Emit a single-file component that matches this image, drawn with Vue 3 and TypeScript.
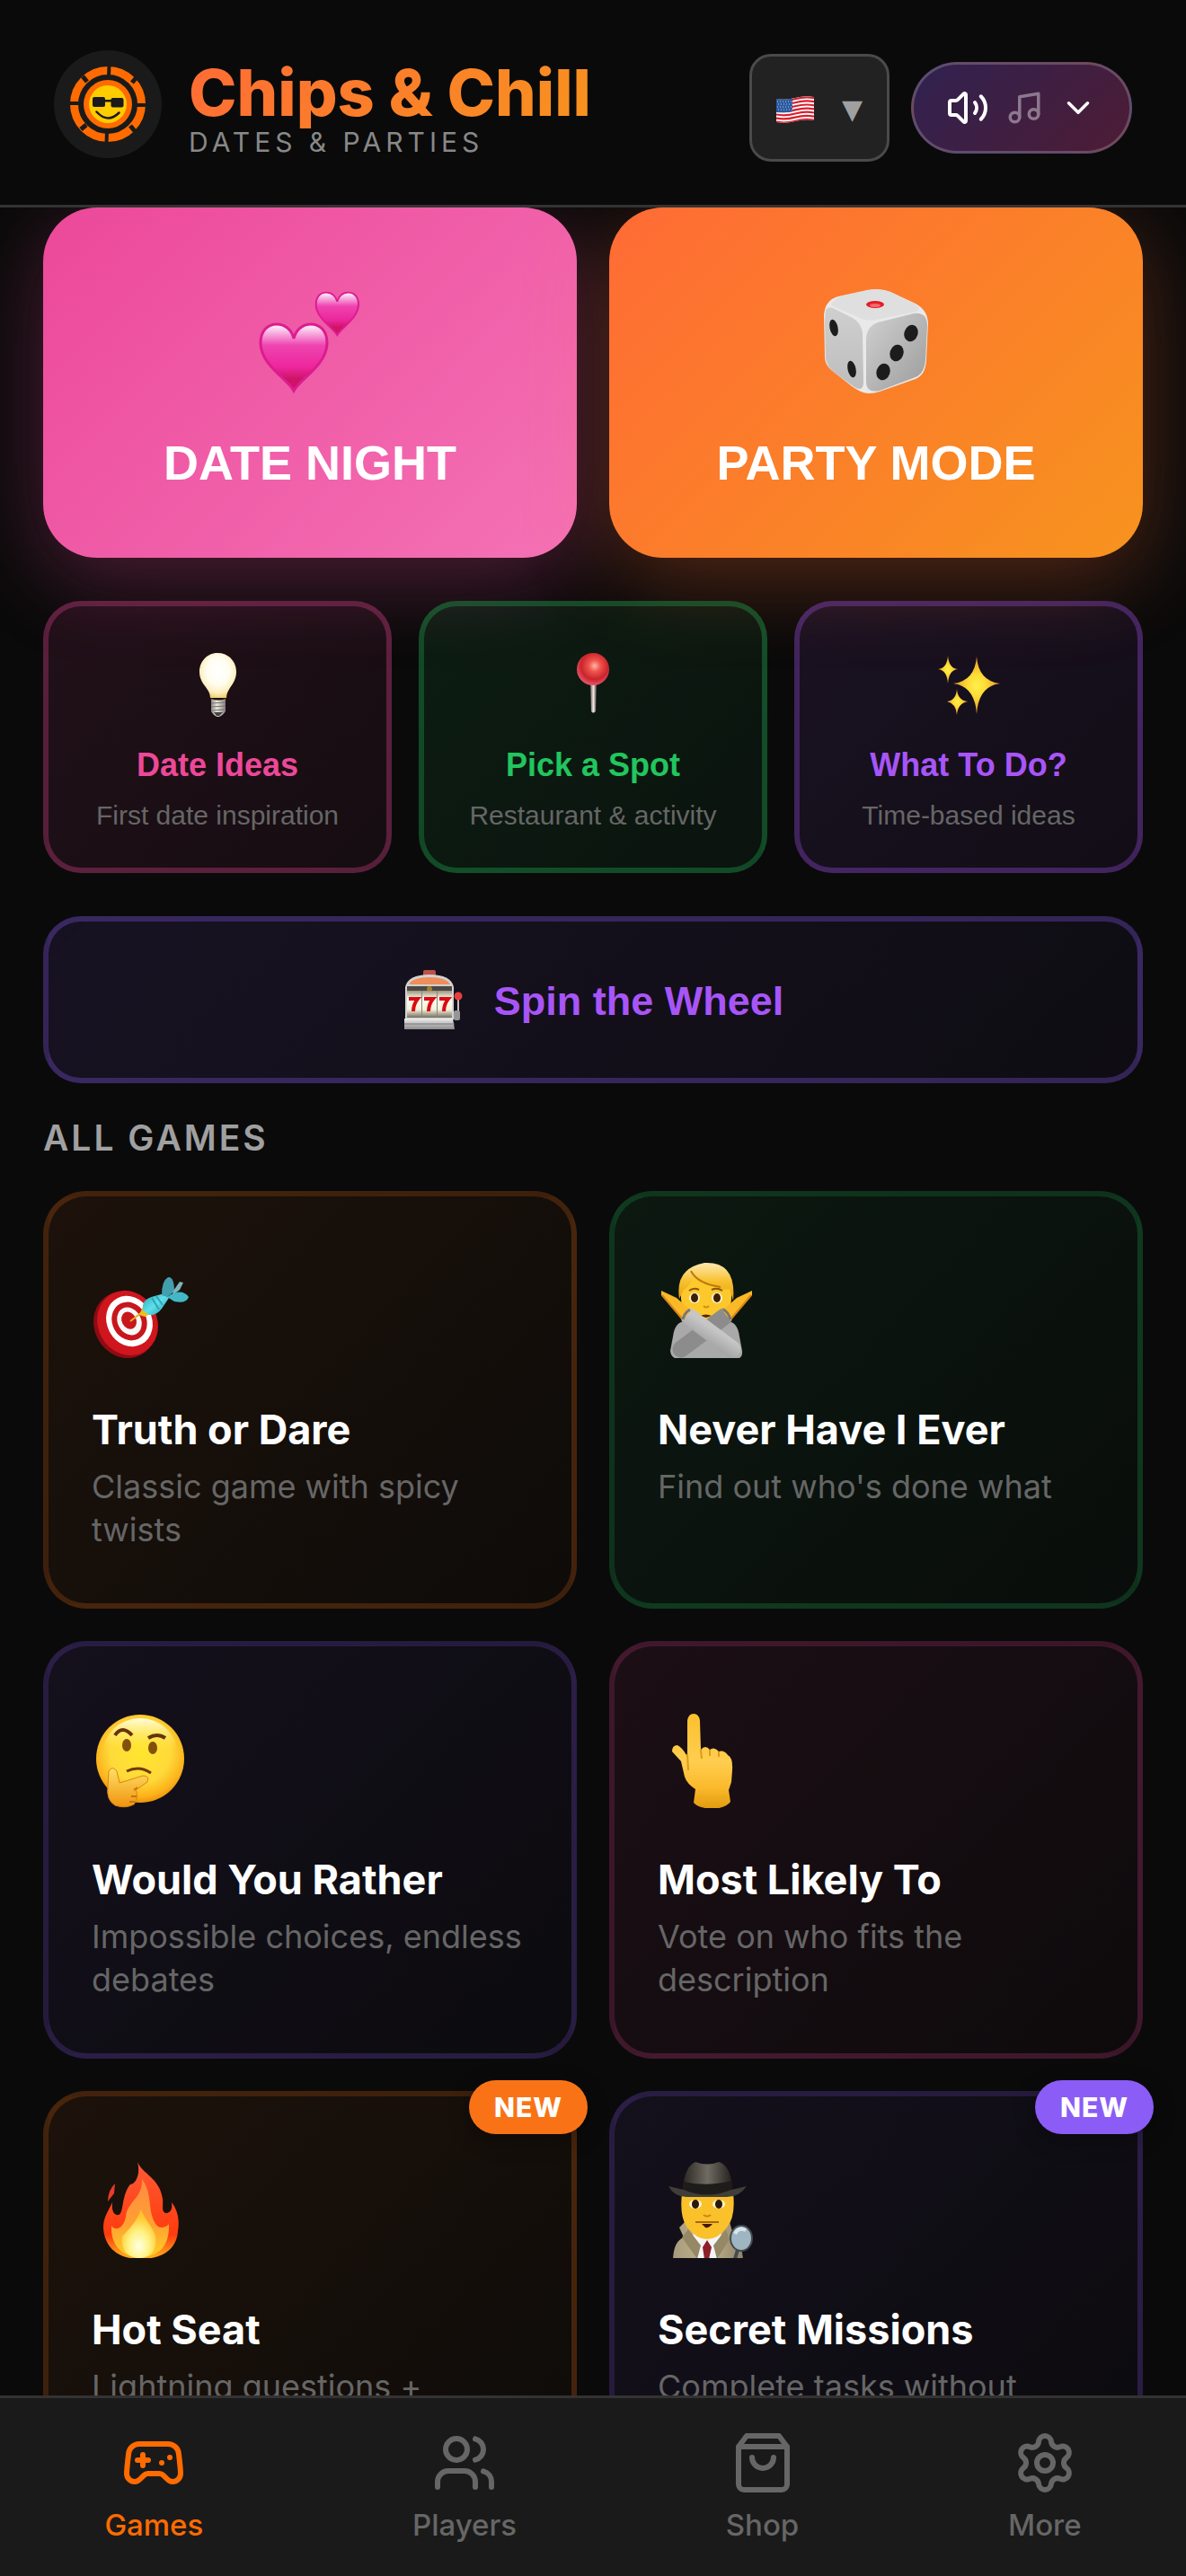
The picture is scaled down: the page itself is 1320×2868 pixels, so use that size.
<script setup lang="ts">
import { ref } from 'vue'

interface QuickLink { id: string; title: string; note: string; tone: string }
interface Game { id: string; title: string; text: string; tone: string; badge?: string }
interface Tab { id: string; label: string }

const language = ref('en')
const activeTab = ref('games')

const quickLinks: QuickLink[] = [
  { id: 'bulb', title: 'Date Ideas', note: 'First date inspiration', tone: 'pink' },
  { id: 'pin', title: 'Pick a Spot', note: 'Restaurant & activity', tone: 'green' },
  { id: 'sparkles', title: 'What To Do?', note: 'Time-based ideas', tone: 'purple' },
]

const games: Game[] = [
  { id: 'target', title: 'Truth or Dare', text: 'Classic game with spicy twists', tone: 'orange' },
  { id: 'never', title: 'Never Have I Ever', text: "Find out who's done what", tone: 'green' },
  { id: 'thinking', title: 'Would You Rather', text: 'Impossible choices, endless debates', tone: 'violet' },
  { id: 'pointing', title: 'Most Likely To', text: 'Vote on who fits the description', tone: 'pink' },
  { id: 'fire', title: 'Hot Seat', text: 'Lightning questions +', tone: 'orange', badge: 'NEW' },
  { id: 'detective', title: 'Secret Missions', text: 'Complete tasks without', tone: 'violet', badge: 'NEW' },
]

const tabs: Tab[] = [
  { id: 'games', label: 'Games' },
  { id: 'players', label: 'Players' },
  { id: 'shop', label: 'Shop' },
  { id: 'more', label: 'More' },
]
</script>

<template>
  <div class="app">
    <header class="header">
      <div class="brand">
        <svg class="logo" viewBox="0 0 120 120" aria-hidden="true">
          <circle cx="60" cy="60" r="60" fill="#1a1a1a" />
          <circle cx="60" cy="60" r="37.500" fill="none" stroke="#ff6b00" stroke-width="9" />
          <g stroke="#1a1a1a" stroke-width="4">
            <path d="M61.500 16 61 30M59 90 58.500 104M16 59H30M90 61H104" />
            <path d="M32 29 37 35M92 30 87 36M30 88 36 83M85 84 90 90" stroke-width="5" />
          </g>
          <circle cx="60" cy="60" r="27" fill="#ff6b00" />
          <circle cx="60" cy="60" r="21" fill="#ffcc00" />
          <g fill="#1a1a1a">
            <rect x="43" y="52" width="14" height="11" rx="2" />
            <rect x="63.500" y="53" width="14" height="10.500" rx="2" />
            <path d="M55 55h10v2.500H55z" />
          </g>
          <path d="M47.500 68.500Q60 82 72.500 69.500" fill="none" stroke="#1a1a1a" stroke-width="2.500" stroke-linecap="round" />
        </svg>
        <div class="brand-text">
          <h1>Chips &amp; Chill</h1>
          <p>DATES &amp; PARTIES</p>
        </div>
      </div>

      <div class="controls">
        <div class="language">
          <select v-model="language" aria-label="Language">
            <option value="en">EN</option>
          </select>
          <span class="language-face" aria-hidden="true">
            <svg class="flag" viewBox="0 0 42 30">
              <defs>
                <clipPath id="flagShape"><path d="M0 3Q10 5 21 2T42 1V27Q32 25 21 28T0 29Z" /></clipPath>
              </defs>
              <g clip-path="url(#flagShape)">
                <path d="M0 0H42V30H0z" fill="#fff" />
                <g fill="none" stroke="#d9202e" stroke-width="2.200">
                  <path v-for="n in 7" :key="n" d="M0 0Q10 2 21-1T42-2" :transform="`translate(0 ${n * 4.1})`" />
                </g>
                <path d="M0 2Q9 4.500 18 2V17Q9 19 0 18Z" fill="#2c5aa0" />
                <g fill="none" stroke="#b9cbe8" stroke-width="1" stroke-dasharray="1 2">
                  <path d="M1 6H18M2 9H18M1 12H18M2 15H18" />
                </g>
              </g>
            </svg>
            <span class="triangle">▼</span>
          </span>
        </div>
        <button class="audio" type="button" aria-label="Sound settings">
          <svg class="line-icon speaker" viewBox="0 0 24 24">
            <path d="M11 4.702a.705.705 0 0 0-1.203-.498L6.413 7.587A1.400 1.400 0 0 1 5.416 8H3a1 1 0 0 0-1 1v6a1 1 0 0 0 1 1h2.416a1.400 1.400 0 0 1 .997.413l3.383 3.384A.705.705 0 0 0 11 19.298z" />
            <path d="M16 9a5 5 0 0 1 0 6M19.364 18.364a9 9 0 0 0 0-12.728" />
          </svg>
          <svg class="line-icon music" viewBox="0 0 24 24">
            <path d="M9 18V5l12-2v13" /><circle cx="6" cy="18" r="3" /><circle cx="18" cy="16" r="3" />
          </svg>
          <svg class="line-icon" viewBox="0 0 24 24"><path d="m6 9 6 6 6-6" /></svg>
        </button>
      </div>
    </header>

    <main class="content">
      <div class="modes">
        <button class="mode date" type="button">
          <svg viewBox="0 0 120 120" aria-hidden="true">
            <defs>
              <linearGradient id="heartFill" x1="0" y1="0" x2="0" y2="1">
                <stop offset="0" stop-color="#fff" /><stop offset=".12" stop-color="#f8b5e2" />
                <stop offset=".32" stop-color="#ef44b0" /><stop offset=".65" stop-color="#ec269c" /><stop offset=".82" stop-color="#cf1467" />
              </linearGradient>
              <path id="heart" d="M38 75C31 62 1 46 1 22 1 8 9 1 19 1 29 1 36 8 38 17 40 8 47 1 57 1 67 1 75 8 75 22 75 46 45 62 38 75Z" fill="url(#heartFill)" stroke="#dc1c90" stroke-width="3" />
            </defs>
            <use href="#heart" x="4" y="39" />
            <use href="#heart" transform="translate(66 4) scale(.64)" />
          </svg>
          <span>DATE NIGHT</span>
        </button>
        <button class="mode party" type="button">
          <svg viewBox="0 0 120 120" aria-hidden="true">
            <defs>
              <linearGradient id="dieLeft" x1="0" y1="0" x2="0" y2="1"><stop offset="0" stop-color="#cfcfcf" /><stop offset="1" stop-color="#bdbdbd" /></linearGradient>
              <linearGradient id="dieRight" x1="0" y1="0" x2="1" y2="1"><stop offset="0" stop-color="#d0d0d0" /><stop offset="1" stop-color="#9c9c9c" /></linearGradient>
            </defs>
            <path d="M52 117C45 117 39 113 33 109L14 94C6 88 3 83 3 76L2 30C3 18 8 12 18 9L50 2C60 0 68 1 76 4L104 17C113 22 117 28 118 38L116 80C115 92 112 97 104 101L64 115Q58 117 52 117Z" fill="#e9e9e9" />
            <path d="M12 15Q16 10 26 8L52 2Q64 0 76 4L102 17Q112 23 104 26L60 35Q48 37 38 31L12 20Q8 18 12 15Z" fill="#dedfde" />
            <path d="M4 24Q8 19 14 23L34 33Q44 39 45 50L46 104Q46 116 36 110L14 94Q5 87 4 78L3 36Z" fill="url(#dieLeft)" />
            <path d="M49 56Q50 42 62 38L102 28Q117 26 117 42L115 80Q114 93 106 98L64 114Q49 117 49 104Z" fill="url(#dieRight)" />
            <ellipse cx="59" cy="18" rx="10" ry="4" fill="#e51c26" /><ellipse cx="59" cy="19" rx="6" ry="2" fill="#f26a6c" />
            <g fill="#1c1c1c">
              <ellipse cx="13" cy="44" rx="4.500" ry="9.500" transform="rotate(-12 13 44)" />
              <ellipse cx="33" cy="90" rx="4.500" ry="9.500" transform="rotate(-12 33 90)" />
              <ellipse cx="99" cy="50" rx="7.500" ry="9.500" transform="rotate(18 99 50)" />
              <ellipse cx="83" cy="72" rx="7.500" ry="9.500" transform="rotate(18 83 72)" />
              <ellipse cx="68" cy="93" rx="7.500" ry="9.500" transform="rotate(18 68 93)" />
            </g>
          </svg>
          <span>PARTY MODE</span>
        </button>
      </div>

      <div class="quick">
        <button v-for="link in quickLinks" :key="link.id" type="button" class="quick-card" :class="link.tone">
          <svg v-if="link.id === 'bulb'" viewBox="0 0 72 72" aria-hidden="true">
            <defs>
              <radialGradient id="bulbGlass" cx=".5" cy=".4" r=".62"><stop offset="0" stop-color="#fff" /><stop offset=".5" stop-color="#fffdf0" /><stop offset=".8" stop-color="#fbeebc" /><stop offset="1" stop-color="#efcb60" /></radialGradient>
              <linearGradient id="bulbBase"><stop offset="0" stop-color="#8d8882" /><stop offset=".4" stop-color="#e8e5de" /><stop offset="1" stop-color="#85807a" /></linearGradient>
            </defs>
            <path d="M29 52Q37 55 45 52L45 66Q41 72 36 72 32 71 29 66Z" fill="url(#bulbBase)" />
            <path d="M32 67H42L38 71H35Z" fill="#444" />
            <path d="M29 57 45 56M29 61 45 60M30 65 44 64" stroke="#77736d" stroke-width="1" />
            <path d="M36 1C49 1 57 11 57 22 57 36 46 40 46 51H28C28 40 16 36 16 22 16 11 24 1 36 1Z" fill="url(#bulbGlass)" />
          </svg>
          <svg v-else-if="link.id === 'pin'" viewBox="0 0 72 72" aria-hidden="true">
            <defs>
              <radialGradient id="pinBall" cx=".55" cy=".4" r=".6"><stop offset="0" stop-color="#ffb6a4" /><stop offset=".3" stop-color="#f0544c" /><stop offset=".7" stop-color="#c9242d" /><stop offset="1" stop-color="#e8556a" /></radialGradient>
              <linearGradient id="pinNeedle"><stop offset="0" stop-color="#6c625e" /><stop offset=".5" stop-color="#f0e4df" /><stop offset="1" stop-color="#4d4744" /></linearGradient>
            </defs>
            <path d="M33 34H40L39 66Q36 69 34 66Z" fill="url(#pinNeedle)" />
            <circle cx="36" cy="19" r="18" fill="url(#pinBall)" />
          </svg>
          <svg v-else viewBox="0 0 72 72" aria-hidden="true">
            <defs>
              <radialGradient id="starFill"><stop offset="0" stop-color="#fff04d" /><stop offset=".4" stop-color="#fddb35" /><stop offset="1" stop-color="#e89128" /></radialGradient>
            </defs>
            <g fill="url(#starFill)">
              <path d="M45 5Q47 32 71 35 47 38 45 69 43 38 19 35 43 32 45 5Z" />
              <path d="M13 4Q14 18 24 19 14 20 13 35 12 20 2 19 12 18 13 4Z" />
              <path d="M23 41Q24 54 35 55 24 57 23 70 22 57 12 55 22 54 23 41Z" />
            </g>
          </svg>
          <strong>{{ link.title }}</strong>
          <small>{{ link.note }}</small>
        </button>
      </div>

      <button class="spin" type="button">
        <svg viewBox="0 0 72 72" aria-hidden="true">
          <defs>
            <linearGradient id="slotReel" x1="0" y1="0" x2="0" y2="1"><stop offset="0" stop-color="#9a957f" /><stop offset=".3" stop-color="#fffff0" /><stop offset=".7" stop-color="#f3f0dc" /><stop offset="1" stop-color="#756f5f" /></linearGradient>
            <linearGradient id="slotBase" x1="0" y1="0" x2="0" y2="1"><stop offset="0" stop-color="#eee" /><stop offset="1" stop-color="#8b8b8b" /></linearGradient>
          </defs>
          <rect x="23" y="3" width="14" height="8" rx="2" fill="#bf5148" />
          <path d="M3 22Q6 8 30 8T57 22V58H3Z" fill="#d2d2d2" />
          <path d="M7 19Q11 11 30 11T53 19Z" fill="#ef8d5b" />
          <path d="M5 21H55V26H5z" fill="#4b4844" />
          <circle cx="30" cy="24" r="3" fill="#a67d28" />
          <path d="M5 26H55V56H5z" fill="url(#slotReel)" />
          <path d="M21.500 26V56M38.500 26V56" stroke="#8b8575" stroke-width="1" />
          <path d="M2 57H56L58 69H2z" fill="url(#slotBase)" />
          <path d="M2 63H58" stroke="#777" stroke-width="1" />
          <path d="M62 32V57" stroke="#c7bdb9" stroke-width="2" />
          <rect x="57" y="48" width="7" height="11" rx="2" fill="#969696" />
          <circle cx="62" cy="32" r="4.500" fill="#e73f3c" />
          <g fill="none" stroke="#dd0b12" stroke-width="4">
            <path d="M7 35H17Q12 41 12 49M24 35H34Q29 41 29 49M41 35H51Q46 41 46 49" />
          </g>
        </svg>
        <span>Spin the Wheel</span>
      </button>

      <h2>ALL GAMES</h2>

      <div class="games">
        <button v-for="game in games" :key="game.id" type="button" class="game" :class="game.tone">
          <svg v-if="game.id === 'target'" viewBox="0 0 108 108" aria-hidden="true">
            <defs><linearGradient id="dartBody" x1="0" y1="0" x2="1" y2="1"><stop offset="0" stop-color="#2aa3b5" /><stop offset=".5" stop-color="#5fe0ec" /><stop offset="1" stop-color="#2795a6" /></linearGradient></defs>
            <ellipse cx="37" cy="71" rx="34" ry="38" fill="#8d0c12" transform="rotate(-28 37 71)" />
            <ellipse cx="40" cy="69" rx="33" ry="37" fill="#cf151d" transform="rotate(-28 40 69)" />
            <g transform="rotate(-28 42 67)">
              <ellipse cx="42" cy="67" rx="25" ry="29" fill="#fff" />
              <ellipse cx="42" cy="67" rx="19" ry="22" fill="#c8161d" />
              <ellipse cx="42" cy="67" rx="13" ry="16" fill="#f7f7f7" />
              <ellipse cx="42" cy="66" rx="8" ry="10" fill="#c8161d" />
            </g>
            <path d="M43 67 56 57" stroke="#e6b31d" stroke-width="2" />
            <path d="M53 60 57 51 65 59 59 62Z" fill="#edc019" />
            <path d="M57 55Q55 42 70 39L81 36 86 41 78 53Q72 61 64 60Z" fill="url(#dartBody)" />
            <path d="M78 38Q78 22 85 18 92 17 92 34L84 40Z" fill="#419fae" />
            <path d="M91 33 98 23 102 24 98 32 90 38Z" fill="#7fb4bd" />
            <path d="M84 40Q100 29 108 40 105 48 92 45Z" fill="#42b8c7" />
            <path d="M67 41 75 54M72 39 79 49" stroke="#2fa5b5" stroke-width="2" />
          </svg>

          <svg v-else-if="game.id === 'never'" viewBox="0 0 108 108" aria-hidden="true">
            <defs>
              <linearGradient id="hair" x1="0" y1="0" x2="0" y2="1"><stop offset="0" stop-color="#ffe9b0" /><stop offset=".5" stop-color="#f7c02c" /><stop offset="1" stop-color="#e39f15" /></linearGradient>
              <linearGradient id="sleeve" gradientUnits="userSpaceOnUse" x1="60" y1="74" x2="50" y2="90"><stop offset="0" stop-color="#c6c6c6" /><stop offset="1" stop-color="#a2a2a2" /></linearGradient>
            </defs>
            <path d="M30 67Q19 68 17 84L14 100Q15 109 24 109H86Q95 109 94 100L91 84Q89 68 78 67Z" fill="#a9a9a9" />
            <rect x="26" y="10" width="56" height="58" rx="26" fill="#fdc82b" />
            <path d="M24 42Q19 8 52 2 88 0 84 44L80 31Q74 33 66 29 48 25 39 18 36 28 29 32Z" fill="url(#hair)" />
            <path d="M37 11Q44 25 70 29" fill="none" stroke="#b97a0d" stroke-width="2" />
            <path d="M35 33Q40 29 46 32M60 32Q66 29 72 33" fill="none" stroke="#8d560d" stroke-width="2" />
            <circle cx="41" cy="41" r="6" fill="#fff5d0" /><circle cx="66" cy="41" r="6" fill="#fff5d0" />
            <ellipse cx="41" cy="41" rx="4" ry="5" fill="#3d1f06" /><ellipse cx="66" cy="41" rx="4" ry="5" fill="#3d1f06" />
            <path d="M51 50Q54 53 57 50" fill="none" stroke="#d79012" stroke-width="2" />
            <path d="M47 61Q54 58 60 61L54 63Z" fill="#56230c" />
            <g fill="none" stroke-linecap="round" stroke-width="19">
              <path d="M74 62 26 98" stroke="#8c8c8c" />
              <path d="M35 62 83 98" stroke="url(#sleeve)" />
            </g>
            <path d="M4 33 21 41 37 55 28 66 16 52 4 38Z" fill="#fbb827" /><path d="M105 33 88 41 72 55 81 66 93 52 105 38Z" fill="#fbb827" />
            <path d="M5 38 16 51 27 64M104 38 93 51 82 64" fill="none" stroke="#d88716" stroke-width="2" />
            <path d="M36 54Q30 57 28 65M73 54Q79 57 81 65" fill="none" stroke="#777" stroke-width="3" />
          </svg>

          <svg v-else-if="game.id === 'thinking'" viewBox="0 0 108 108" aria-hidden="true">
            <defs>
              <radialGradient id="faceFill" cx=".5" cy=".42" r=".58"><stop offset="0" stop-color="#ffe62e" /><stop offset=".6" stop-color="#ffd93a" /><stop offset=".88" stop-color="#fcb21a" /><stop offset="1" stop-color="#ee930b" /></radialGradient>
              <linearGradient id="faceShine" x1="0" y1="0" x2="0" y2="1"><stop offset="0" stop-color="#fffde0" /><stop offset=".45" stop-color="#ffef58" stop-opacity="0" /></linearGradient>
              <linearGradient id="chinHand" x1="0" y1="0" x2="0" y2="1"><stop offset="0" stop-color="#ffe066" /><stop offset="1" stop-color="#f0930f" /></linearGradient>
            </defs>
            <circle cx="54" cy="53" r="49" fill="url(#faceFill)" />
            <ellipse cx="54" cy="46" rx="41" ry="38" fill="url(#faceShine)" />
            <ellipse cx="39" cy="38" rx="5" ry="7" fill="#82500b" /><ellipse cx="68" cy="41" rx="5" ry="7" fill="#82500b" />
            <path d="M26 27Q34 15 45 27M63 30Q73 24 82 30" fill="none" stroke="#68330a" stroke-width="4" />
            <path d="M39 67Q53 60 66 69" fill="none" stroke="#713809" stroke-width="3" />
            <path d="M19 67Q23 60 28 67L31 80 57 72Q65 72 62 79L49 88Q53 95 47 104 37 109 26 105 16 99 18 84Z" fill="url(#chinHand)" stroke="#dc8510" stroke-width="1" />
            <path d="M47 88 51 85M44 95H50M42 101H48" stroke="#c67510" stroke-width="2" />
          </svg>

          <svg v-else-if="game.id === 'pointing'" viewBox="0 0 108 108" aria-hidden="true">
            <defs><linearGradient id="handFill" x1="0" y1="0" x2="0" y2="1"><stop offset="0" stop-color="#fcc02d" /><stop offset=".5" stop-color="#ffce50" /><stop offset=".78" stop-color="#fbb92b" /><stop offset="1" stop-color="#e19a0e" /></linearGradient></defs>
            <path d="M33 48V11Q34 3 40 3 46 3 47 11L48 43Q53 37 58 43 63 39 68 45 74 43 78 49 84 52 83 66L82 79 79 88 81 101Q76 108 61 109 45 108 40 102L42 87Q30 79 29 69L26 56 16 45Q16 38 22 38 28 41 33 51Z" fill="url(#handFill)" />
            <path d="M33 48 34 66M48 43 49 53M58 43V50M68 45 68 51" fill="none" stroke="#de9a18" stroke-width="2" />
          </svg>

          <svg v-else-if="game.id === 'fire'" viewBox="0 0 108 108" aria-hidden="true">
            <defs>
              <linearGradient id="flameOuter" x1="0" y1="0" x2="0" y2="1"><stop offset="0" stop-color="#ff5a34" /><stop offset=".75" stop-color="#ff3b0e" /><stop offset="1" stop-color="#ffb51f" /></linearGradient>
              <linearGradient id="flameMid" x1="0" y1="0" x2="0" y2="1"><stop offset="0" stop-color="#ff8a44" /><stop offset=".6" stop-color="#ffa231" /><stop offset="1" stop-color="#ffcf24" /></linearGradient>
              <radialGradient id="flameCore" cx=".5" cy=".75" r=".6"><stop offset="0" stop-color="#ffffe4" /><stop offset=".5" stop-color="#fff385" /><stop offset="1" stop-color="#ffc72d" /></radialGradient>
            </defs>
            <path d="M51 1C56 14 76 19 79 42 80 50 77 57 83 58 89 57 90 52 89 46 96 55 98 66 96 78 95 94 84 109 54 109 27 109 14 94 13 74 13 62 19 55 23 46 22 56 25 61 30 60 36 58 33 38 43 26 48 26 55 16 51 1Z" fill="url(#flameOuter)" />
            <path d="M26 25 25 36 18 45Q18 33 26 25Z" fill="#e83b29" />
            <path d="M56 20C68 36 62 54 70 68 75 78 84 73 86 70 87 94 75 107 54 107 34 107 21 94 22 72 27 79 36 74 38 62 40 44 57 42 56 20Z" fill="url(#flameMid)" />
            <path d="M55 54C59 66 68 72 71 84 73 99 66 108 53 108 40 108 32 98 34 84 41 76 50 68 55 54Z" fill="url(#flameCore)" />
          </svg>

          <svg v-else viewBox="0 0 108 108" aria-hidden="true">
            <defs>
              <linearGradient id="hatFill"><stop offset="0" stop-color="#292722" /><stop offset=".5" stop-color="#706b62" /><stop offset="1" stop-color="#23211e" /></linearGradient>
              <linearGradient id="coatFill"><stop offset="0" stop-color="#a79b7c" /><stop offset=".5" stop-color="#c3b590" /><stop offset="1" stop-color="#8f8468" /></linearGradient>
            </defs>
            <path d="M17 109Q18 89 29 85L24 74 30 68H80L85 85Q93 90 95 109Z" fill="url(#coatFill)" />
            <path d="M39 80H71L66 109H44Z" fill="#f5f5f5" />
            <path d="M55 88 60 96 57 109H52L50 96Z" fill="#8e1e29" />
            <path d="M27 36H84Q87 62 77 74 67 87 55 87 43 87 33 74 24 62 27 36Z" fill="#fac12b" />
            <path d="M34 76 48 94 44 109 27 85ZM76 76 62 94 66 109 80 87Z" fill="#968865" />
            <path d="M28 29Q31 5 42 1 55 6 68 1 81 5 83 29L78 37H33Z" fill="url(#hatFill)" />
            <path d="M29 23Q55 29 82 22L83 33Q55 44 28 33Z" fill="#1d1c1b" />
            <path d="M12 28 29 32Q55 43 82 32L99 28Q91 40 77 40H34Q18 40 12 28Z" fill="#413e39" />
            <ellipse cx="42" cy="48" rx="7" ry="5" fill="#fff4d2" /><ellipse cx="68" cy="48" rx="7" ry="5" fill="#fff4d2" />
            <ellipse cx="42" cy="48" rx="4" ry="5" fill="#2c1908" /><ellipse cx="68" cy="48" rx="4" ry="5" fill="#2c1908" />
            <path d="M51 60Q55 63 59 60" fill="none" stroke="#ce840d" stroke-width="2" />
            <path d="M42 68H68" fill="none" stroke="#a8660f" stroke-width="2" /><path d="M49 70H61Q57 75 53 74Z" fill="#42180a" />
            <path d="M89 99 86 109" stroke="#454b50" stroke-width="4" />
            <ellipse cx="93" cy="86" rx="12" ry="14" fill="#9fb5c2" stroke="#424a50" stroke-width="2" />
            <path d="M86 81Q90 73 98 77" fill="none" stroke="#d8e5ec" stroke-width="4" />
          </svg>

          <strong>{{ game.title }}</strong>
          <span class="description">{{ game.text }}</span>
          <span v-if="game.badge" class="badge">{{ game.badge }}</span>
        </button>
      </div>
    </main>

    <nav class="tabs" aria-label="Main">
      <button v-for="tab in tabs" :key="tab.id" type="button" :class="{ active: tab.id === activeTab }" @click="activeTab = tab.id">
        <svg class="line-icon" viewBox="0 0 24 24" aria-hidden="true">
          <template v-if="tab.id === 'games'">
            <path d="M6 11h4M8 9v4M15 12h.010M18 10h.010" />
            <path d="M17.320 5H6.680a4 4 0 0 0-3.978 3.590c-.006.052-.010.101-.017.152C2.604 9.416 2 14.456 2 16a3 3 0 0 0 3 3c1 0 1.500-.5 2-1l1.414-1.414A2 2 0 0 1 9.828 16h4.344a2 2 0 0 1 1.414.586L17 18c.5.5 1 1 2 1a3 3 0 0 0 3-3c0-1.545-.604-6.584-.685-7.258-.007-.050-.011-.1-.017-.151A4 4 0 0 0 17.320 5z" />
          </template>
          <template v-else-if="tab.id === 'players'">
            <path d="M16 21v-2a4 4 0 0 0-4-4H6a4 4 0 0 0-4 4v2" /><circle cx="9" cy="7" r="4" />
            <path d="M22 21v-2a4 4 0 0 0-3-3.870M16 3.130a4 4 0 0 1 0 7.750" />
          </template>
          <template v-else-if="tab.id === 'shop'">
            <path d="M6 2 3 6v14a2 2 0 0 0 2 2h14a2 2 0 0 0 2-2V6l-3-4ZM3 6h18M16 10a4 4 0 0 1-8 0" />
          </template>
          <template v-else>
            <path d="M9.671 4.136a2.340 2.340 0 0 1 4.659 0 2.340 2.340 0 0 0 3.319 1.915 2.340 2.340 0 0 1 2.330 4.033 2.340 2.340 0 0 0 0 3.831 2.340 2.340 0 0 1-2.330 4.033 2.340 2.340 0 0 0-3.319 1.915 2.340 2.340 0 0 1-4.659 0 2.340 2.340 0 0 0-3.320-1.915 2.340 2.340 0 0 1-2.330-4.033 2.340 2.340 0 0 0 0-3.831A2.340 2.340 0 0 1 6.350 6.051a2.340 2.340 0 0 0 3.319-1.915" />
            <circle cx="12" cy="12" r="3" />
          </template>
        </svg>
        <span>{{ tab.label }}</span>
      </button>
    </nav>
  </div>
</template>

<style>
body {
  margin: 0;
  background: #0a0a0a;
}
</style>

<style scoped>
.app {
  display: flex;
  flex-direction: column;
  height: 100vh;
  background: #0a0a0a;
  color: #fff;
  font-family: Inter, sans-serif;
}

button {
  margin: 0;
  padding: 0;
  border: 0;
  color: inherit;
  font-family: "Liberation Sans", Arial, sans-serif;
  cursor: pointer;
}

svg {
  display: block;
  flex: none;
}

.line-icon {
  fill: none;
  stroke: currentColor;
  stroke-width: 2;
  stroke-linecap: round;
  stroke-linejoin: round;
}

.header {
  display: flex;
  align-items: center;
  justify-content: space-between;
  flex: none;
  padding: 56px 60px 44px;
  border-bottom: 3px solid #333;
}

.brand {
  display: flex;
  align-items: flex-end;
  gap: 30px;
  padding-bottom: 8px;
}

.logo {
  width: 120px;
  height: 120px;
}

.brand-text {
  padding-bottom: 3px;
}

.brand-text h1 {
  margin: 0;
  background: linear-gradient(135deg, #ff6b35, #f7931e);
  background-clip: text;
  -webkit-background-clip: text;
  color: transparent;
  font-size: 72px;
  font-weight: 800;
  line-height: 80px;
}

.brand-text p {
  margin: 0;
  color: #888;
  font-size: 30px;
  line-height: 30px;
  letter-spacing: 5px;
}

.controls {
  display: flex;
  align-items: center;
  gap: 24px;
}

.language {
  display: grid;
}

.language > * {
  grid-area: 1 / 1;
}

.language select {
  width: 156px;
  height: 120px;
  border: 3px solid #4a4a4a;
  border-radius: 24px;
  background: #222;
  color: transparent;
  appearance: none;
}

.language-face {
  display: flex;
  align-items: center;
  justify-content: space-between;
  padding: 4px 30px 0;
  pointer-events: none;
}

.flag {
  width: 42px;
  height: 30px;
}

.triangle {
  color: #a0a0a0;
  font-family: "DejaVu Sans", sans-serif;
  font-size: 30px;
  line-height: 36px;
}

.audio {
  display: flex;
  align-items: center;
  gap: 18px;
  height: 102px;
  padding: 0 36px;
  border: 3px solid rgba(255, 255, 255, 0.2);
  border-radius: 60px;
  background: linear-gradient(135deg, rgba(139, 92, 246, 0.3), rgba(236, 72, 153, 0.3));
  box-sizing: border-box;
}

.audio svg {
  width: 42px;
  height: 42px;
}

.audio .speaker {
  width: 48px;
  height: 48px;
}

.audio .music {
  opacity: 0.4;
}

.content {
  display: flex;
  flex: 1;
  flex-direction: column;
  gap: 48px;
  min-height: 0;
  padding: 0 48px;
  overflow: hidden;
}

.content > * {
  flex: none;
}

.modes {
  display: grid;
  grid-template-columns: 1fr 1fr;
  gap: 36px;
}

.mode {
  display: flex;
  flex-direction: column;
  align-items: center;
  gap: 44px;
  padding: 90px 0 76px;
  border-radius: 60px;
  font-size: 54px;
  font-weight: 700;
  line-height: 60px;
}

.mode svg {
  width: 120px;
  height: 120px;
}

.date {
  background: linear-gradient(135deg, #ec4899, #f472b6);
  box-shadow: 0 24px 96px rgba(236, 72, 153, 0.3);
}

.party {
  background: linear-gradient(135deg, #ff6b35, #f7931e);
  box-shadow: 0 24px 96px rgba(255, 107, 53, 0.3);
}

.quick {
  display: grid;
  grid-template-columns: repeat(3, 1fr);
  gap: 30px;
}

.quick-card {
  display: flex;
  flex-direction: column;
  align-items: center;
  padding: 51px 0 40px;
  border: 6px solid;
  border-radius: 42px;
}

.quick-card svg {
  width: 72px;
  height: 72px;
  margin-bottom: 34px;
}

.quick-card strong {
  font-size: 36px;
  line-height: 40px;
}

.quick-card small {
  margin-top: 18px;
  color: #666;
  font-size: 30px;
  line-height: 36px;
}

.quick-card.pink {
  border-color: rgba(236, 72, 153, 0.3);
  background: linear-gradient(135deg, rgba(236, 72, 153, 0.1), rgba(236, 72, 153, 0.05));
}

.quick-card.pink strong {
  color: #ec4899;
}

.quick-card.green {
  border-color: rgba(34, 197, 94, 0.3);
  background: linear-gradient(135deg, rgba(34, 197, 94, 0.1), rgba(34, 197, 94, 0.05));
}

.quick-card.green strong {
  color: #22c55e;
}

.quick-card.purple {
  border-color: rgba(168, 85, 247, 0.3);
  background: linear-gradient(135deg, rgba(168, 85, 247, 0.1), rgba(168, 85, 247, 0.05));
}

.quick-card.purple strong {
  color: #a855f7;
}

.spin {
  display: flex;
  align-items: center;
  justify-content: center;
  gap: 30px;
  padding: 51px 0;
  border: 6px solid rgba(139, 92, 246, 0.3);
  border-radius: 42px;
  background: linear-gradient(135deg, rgba(139, 92, 246, 0.1), rgba(139, 92, 246, 0.04));
  color: #a855f7;
  font-size: 45px;
  font-weight: 700;
  line-height: 76px;
}

.spin svg {
  width: 72px;
  height: 72px;
}

.spin span {
  height: 72px;
}

h2 {
  margin: -11px 0 -13px;
  color: #a0a0a0;
  font-size: 39px;
  font-weight: 600;
  line-height: 48px;
  letter-spacing: 3px;
}

.games {
  display: grid;
  grid-template-columns: 1fr 1fr;
  gap: 36px;
}

.game {
  position: relative;
  display: flex;
  flex-direction: column;
  align-items: flex-start;
  min-height: 465px;
  padding: 72px 48px 48px;
  border: 6px solid;
  border-radius: 48px;
  box-sizing: border-box;
  font-family: Inter, sans-serif;
  text-align: left;
}

.game svg {
  width: 108px;
  height: 108px;
  margin-bottom: 53px;
}

.game strong {
  font-size: 45px;
  font-weight: 700;
  line-height: 54px;
}

.description {
  margin-top: 12px;
  color: #666;
  font-size: 36px;
  line-height: 48px;
}

.game.orange {
  --badge: #f97316;
  border-color: rgba(249, 115, 22, 0.2);
  background: linear-gradient(135deg, rgba(249, 115, 22, 0.08), rgba(249, 115, 22, 0.02));
}

.game.green {
  border-color: rgba(34, 197, 94, 0.2);
  background: linear-gradient(135deg, rgba(34, 197, 94, 0.08), rgba(34, 197, 94, 0.02));
}

.game.violet {
  --badge: #8b5cf6;
  border-color: rgba(139, 92, 246, 0.2);
  background: linear-gradient(135deg, rgba(139, 92, 246, 0.08), rgba(139, 92, 246, 0.02));
}

.game.pink {
  border-color: rgba(236, 72, 153, 0.2);
  background: linear-gradient(135deg, rgba(236, 72, 153, 0.08), rgba(236, 72, 153, 0.02));
}

.badge {
  position: absolute;
  top: -18px;
  right: -18px;
  padding: 0 28px;
  border-radius: 30px;
  background: var(--badge);
  box-shadow: 0 6px 24px rgba(0, 0, 0, 0.3);
  font-size: 30px;
  font-weight: 800;
  line-height: 60px;
  letter-spacing: 1px;
}

.tabs {
  display: flex;
  justify-content: space-around;
  flex: none;
  padding: 36px 0 37px;
  border-top: 3px solid #333;
  background: #1a1a1a;
}

.tabs button {
  display: flex;
  flex-direction: column;
  align-items: center;
  gap: 13px;
  background: none;
  color: #666;
  font-family: Inter, sans-serif;
  font-size: 33px;
  font-weight: 500;
  line-height: 40px;
}

.tabs button.active {
  color: #ff6b00;
}

.tabs svg {
  width: 72px;
  height: 72px;
}
</style>
